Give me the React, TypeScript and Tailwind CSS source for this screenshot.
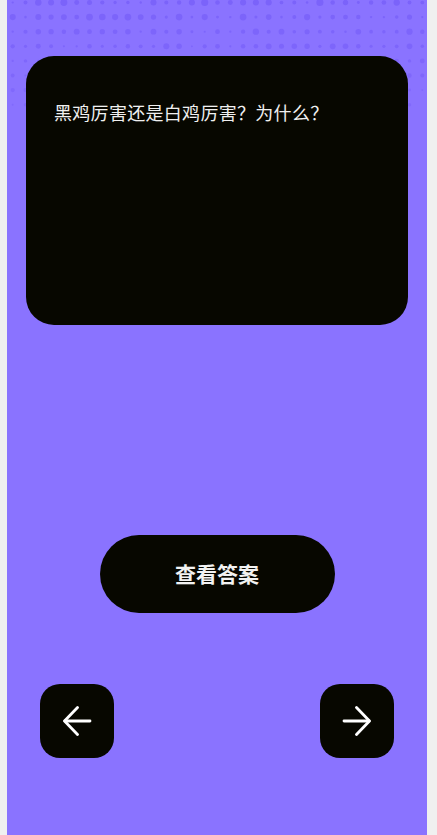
const COLS = 33;
const ROWS = 8;

// deterministic noise for the halftone dots
function noise(i: number, j: number) {
  const s = Math.sin(i * 127.1 + j * 311.7) * 43758.5453;
  return s - Math.floor(s);
}

const DOTS = (() => {
  const out: { x: number; y: number; r: number; o: number }[] = [];
  for (let j = 0; j < ROWS; j++) {
    for (let i = 0; i < COLS; i++) {
      const fade = 1 - j / ROWS;
      const n = noise(i, j);
      const r = (1.1 + n * 2.6) * (0.5 + fade * 0.5);
      if (r < 0.8) continue;
      out.push({ x: 5.7 + i * 12.8, y: 2.5 + j * 14.6, r, o: 0.55 + fade * 0.45 });
    }
  }
  return out;
})();

function Halftone() {
  return (
    <svg className="absolute left-0 top-0 pointer-events-none" width="420" height="125" viewBox="0 0 420 125">
      {DOTS.map((d, k) => (
        <circle key={k} cx={d.x} cy={d.y} r={d.r} fill="#7b63fa" opacity={d.o} />
      ))}
    </svg>
  );
}

function Arrow({ dir }: { dir: "left" | "right" }) {
  return (
    <svg width="30" height="30" viewBox="0 0 30 30" fill="none" stroke="#ffffff" strokeWidth="2.8" strokeLinecap="round" strokeLinejoin="round">
      {dir === "left" ? (
        <>
          <path d="M15.5 1.5 L2.5 15 L15.5 28.5" />
          <path d="M3 15 H28" />
        </>
      ) : (
        <>
          <path d="M14.5 1.5 L27.5 15 L14.5 28.5" />
          <path d="M27 15 H2" />
        </>
      )}
    </svg>
  );
}

export default function App() {
  return (
    <div className="min-h-[835px] w-[437px] bg-[#f0f0f0]" style={{ fontFamily: '"Noto Sans CJK SC", "Noto Sans", sans-serif' }}>
      <div className="relative ml-[7px] w-[420px] min-h-[835px] bg-[#8a73ff] overflow-hidden">
        <Halftone />
        <div className="relative flex flex-col">
          <div className="mx-[19px] mt-[56px] h-[269px] rounded-[28px] bg-[#070700] px-[28px] pt-[42px]">
            <p className="text-[18px] leading-[28px] tracking-[0.3px] text-[#f0f0f0]">黑鸡厉害还是白鸡厉害？为什么？</p>
          </div>

          <div className="mt-[210px] flex justify-center">
            <button
              type="button"
              className="h-[78px] w-[235px] rounded-full bg-[#070700] text-[21px] font-bold text-[#f2f2f2]"
            >
              查看答案
            </button>
          </div>

          <div className="mt-[71px] flex justify-between px-[33px]">
            <button type="button" className="flex h-[74px] w-[74px] items-center justify-center rounded-[20px] bg-[#070700]">
              <Arrow dir="left" />
            </button>
            <button type="button" className="flex h-[74px] w-[74px] items-center justify-center rounded-[20px] bg-[#070700]">
              <Arrow dir="right" />
            </button>
          </div>
        </div>
      </div>
    </div>
  );
}
